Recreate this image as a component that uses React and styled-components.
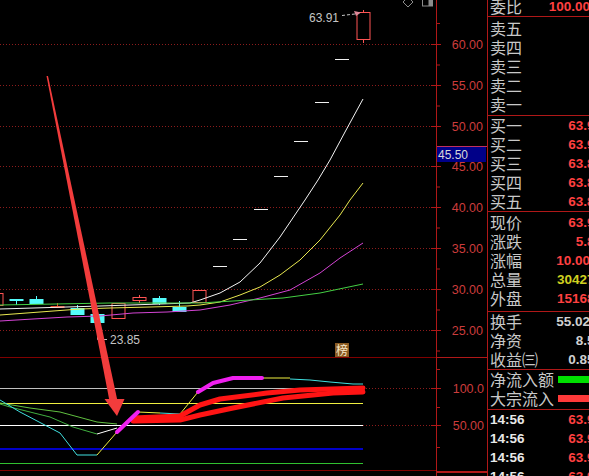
import React from 'react';
import styled, { createGlobalStyle } from 'styled-components';

const GlobalStyle = createGlobalStyle`
  html, body {
    margin: 0;
    padding: 0;
    background: #000;
    overflow: hidden;
  }
`;

const BORDER = '#b01818';
const UP = '#ff5454';
const DOWN = '#54fcfc';

// price -> y on the main pane
const py = p => 44 + (60 - p) * 8.16;
const levels = [60, 55, 50, 45, 40, 35, 30, 25];

const candles = [
  { cx: -3.5, top: 293, bot: 306, hi: 293, lo: 306, k: 'up' },
  { cx: 16.5, top: 299, bot: 301, hi: 299, lo: 305, k: 'down' },
  { cx: 36.5, top: 299, bot: 304, hi: 296, lo: 304, k: 'down' },
  { cx: 57.5, top: 306, bot: 308, hi: 303, lo: 308, k: 'red' },
  { cx: 77.5, top: 308, bot: 315, hi: 305, lo: 315, k: 'down' },
  { cx: 97.5, top: 314, bot: 323, hi: 312, lo: 339, k: 'down' },
  { cx: 118.5, top: 303, bot: 319, hi: 303, lo: 319, k: 'up' },
  { cx: 139.5, top: 297, bot: 301, hi: 295, lo: 303, k: 'up' },
  { cx: 159.5, top: 298, bot: 304, hi: 296, lo: 305, k: 'down' },
  { cx: 179.5, top: 307, bot: 312, hi: 301, lo: 312, k: 'down' },
  { cx: 199.5, top: 290, bot: 303, hi: 290, lo: 303, k: 'up' },
  { cx: 220, y: 266, k: 'flat' },
  { cx: 240, y: 239, k: 'flat' },
  { cx: 261, y: 209, k: 'flat' },
  { cx: 281, y: 176, k: 'flat' },
  { cx: 301, y: 141, k: 'flat' },
  { cx: 322, y: 102, k: 'flat' },
  { cx: 342, y: 59, k: 'flat' },
  { cx: 363.5, top: 12, bot: 40, hi: 10, lo: 43, k: 'up' },
];

const averages = [
  { color: '#f4f4f4', pts: '0,309 100,306 190,303 200,300 220,293 240,282 260,263 280,237 305,200 318,180 330,160 345,132 363,99' },
  { color: '#e8e850', pts: '0,315 40,312 80,309 110,308 150,307 187,306 200,305 220,302 240,295 260,287 280,275 300,260 320,240 340,215 350,200 363,183' },
  { color: '#d444d4', pts: '0,321 33,319 67,317 100,316 133,313 167,312 200,310 230,305 260,298 290,290 320,273 340,258 363,243' },
  { color: '#44d044', pts: '0,305 110,303 200,303 283,298 320,293 363,284' },
];

const flowLevels = [
  { y: 31.5, color: '#c0c0c0', w: 1 },
  { y: 46.5, color: '#f0f040', w: 1 },
  { y: 68.5, color: '#ffffff', w: 1 },
  { y: 92, color: '#0000c8', w: 2 },
  { y: 106.5, color: '#30c030', w: 1 },
];

const flowCurves = [
  { color: '#60c040', w: 1, pts: '0,46 30,51 60,55 97,65 117,67' },
  { color: '#40b040', w: 1, pts: '0,47 10,50 50,60 73,70 97,77' },
  { color: '#ffffff', w: 1, pts: '97,77 117,71' },
  { color: '#40e0e0', w: 1, pts: '0,43 20,55 60,76 77,98 97,98' },
  { color: '#f0f040', w: 1, pts: '97,98 117,75' },
  { color: '#f0f040', w: 1, pts: '138,55 160,56' },
  { color: '#40e0e0', w: 1, pts: '160,56 180,57' },
  { color: '#f0f040', w: 1, pts: '180,57 198,35' },
  { color: '#f0f040', w: 1, pts: '262,21 290,21' },
  { color: '#40e0e0', w: 1, pts: '290,22 310,23 330,25 353,27 363,27' },
  { color: '#ff1414', w: 5, pts: '133,61 180,59 200,48 220,42 267,36 300,33 363,31' },
  { color: '#ff1414', w: 5, pts: '133,64 180,63 200,58 233,51 283,41 333,36 363,35' },
  { color: '#f020f0', w: 4, pts: '117,75 138,55' },
  { color: '#f020f0', w: 4, pts: '198,35 213,26 233,21 262,21' },
];

const GridLine = styled.line`
  stroke: #8c1c1c;
  stroke-width: 1;
  stroke-dasharray: 1 2;
`;

const Rule = styled.line`
  stroke: ${p => p.$color || BORDER};
  stroke-width: ${p => p.$w || 1};
`;

const AxisLabel = styled.text`
  font-family: "Liberation Sans", Arial, sans-serif;
  font-size: 12.5px;
  fill: #cc3c3c;
  text-anchor: end;
`;

const TagText = styled.text`
  font-family: "Liberation Sans", Arial, sans-serif;
  font-size: 12px;
  fill: ${p => p.$color || '#c4c4c4'};
`;

const Curve = styled.polyline`
  fill: none;
  stroke: ${p => p.$color};
  stroke-width: ${p => p.$w || 1};
  stroke-linejoin: round;
  stroke-linecap: ${p => (p.$w > 1 ? 'round' : 'butt')};
`;

const Body = styled.rect`
  fill: ${p => p.$fill};
  stroke: ${p => p.$stroke};
  stroke-width: 1;
`;

const Badge = styled.text`
  font-family: "Noto Sans CJK SC", sans-serif;
  font-size: 12px;
  fill: #f8e8c8;
  text-anchor: middle;
`;

const Screen = styled.div`
  display: flex;
  width: 589px;
  height: 476px;
  overflow: hidden;
  background: #000;
`;

const ChartColumn = styled.div`
  position: relative;
  flex: 0 0 487px;
  display: flex;
  flex-direction: column;
`;

const PricePane = styled.svg`
  display: block;
  width: 487px;
  height: 357px;
  overflow: hidden;
`;

const FlowPane = styled.svg`
  display: block;
  width: 487px;
  height: 119px;
`;

const Annotation = styled.svg`
  position: absolute;
  left: 0;
  top: 0;
  width: 487px;
  height: 476px;
  pointer-events: none;
`;

const QuotePanel = styled.div`
  flex: 0 0 116px;
  margin-top: -3px;
  border-left: 1px solid ${BORDER};
  display: flex;
  flex-direction: column;
`;

const Section = styled.div`
  display: flex;
  flex-direction: column;
  padding: ${p => p.$pad || '0'};
  border-bottom: ${p => (p.$open ? 'none' : `1px solid ${BORDER}`)};
`;

const Row = styled.div`
  display: flex;
  align-items: center;
  justify-content: space-between;
  height: 19px;
  padding: 0 2px;
`;

const Label = styled.span`
  font-family: "Noto Sans CJK SC", sans-serif;
  font-size: 16px;
  line-height: 19px;
  color: #c8c8c8;
  white-space: nowrap;
`;

const Value = styled.span`
  font-family: "Liberation Sans", Arial, sans-serif;
  font-weight: bold;
  font-size: 13.5px;
  color: ${p => p.$color || '#ff4040'};
  white-space: nowrap;
`;

const FlowBar = styled.span`
  flex: 1;
  height: 7px;
  margin-left: 4px;
  margin-right: -2px;
  background: ${p => p.$color};
`;

function Candle({ c }) {
  const x = Math.round(c.cx - 7);
  if (c.k === 'flat') {
    return <Rule x1={x} x2={x + 14} y1={c.y + 0.5} y2={c.y + 0.5} $color="#f0f0f0" />;
  }
  const color = c.k === 'up' ? UP : c.k === 'red' ? '#e84020' : DOWN;
  const hollow = c.k === 'up';
  return (
    <g>
      <Rule x1={c.cx} x2={c.cx} y1={c.hi} y2={c.top} $color={color} />
      <Rule x1={c.cx} x2={c.cx} y1={c.bot} y2={c.lo} $color={color} />
      <Body
        x={c.cx - 6.5}
        y={c.top + 0.5}
        width={13}
        height={Math.max(c.bot - c.top - 1, 1)}
        $fill={hollow ? 'none' : color}
        $stroke={color}
      />
    </g>
  );
}

function PriceChart() {
  return (
    <PricePane viewBox="0 0 487 357">
      {levels.map(l => (
        <GridLine key={l} x1={0} x2={436} y1={Math.round(py(l)) + 0.5} y2={Math.round(py(l)) + 0.5} />
      ))}
      <Rule x1={436.5} x2={436.5} y1={0} y2={357} />
      {levels.map(l => {
        const y = Math.round(py(l)) + 0.5;
        return (
          <g key={l}>
            <Rule x1={431} x2={441} y1={y} y2={y} />
            <Rule x1={436} x2={440} y1={y + 20.5} y2={y + 20.5} />
            <AxisLabel x={483} y={y + 4.5}>{l.toFixed(2)}</AxisLabel>
          </g>
        );
      })}
      <Rule x1={436} x2={440} y1={23.5} y2={23.5} />

      <rect x={437} y={147} width={49} height={15} fill="#000088" />
      <Rule x1={437} x2={487} y1={146.5} y2={146.5} $color="#c03060" />
      <TagText x={438} y={159} $color="#d8d8d8">45.50</TagText>

      {candles.map((c, i) => <Candle key={i} c={c} />)}
      {averages.map((a, i) => <Curve key={i} points={a.pts} $color={a.color} />)}

      <TagText x={309} y={21.5}>63.91</TagText>
      <Rule x1={342} x2={355} y1={15.5} y2={14} $color="#c8c8c8" style={{ strokeDasharray: '3 2' }} />
      <polygon points="354,11 361,12.5 356,16" fill="#e08a9a" />

      <polyline points="97.5,334 97.5,339.5 107,339.5" fill="none" stroke="#c0c0c0" />
      <TagText x={110} y={343.5}>23.85</TagText>

      <polygon points="408,-3 413,2 408,7 403,2" fill="none" stroke="#8c8c8c" />
      <rect x={422.5} y={-3.5} width={10} height={9.5} fill="none" stroke="#8c8c8c" />
      <rect x={428.5} y={-3.5} width={4} height={9.5} fill="#8c8c8c" />

      <rect x={335} y={343} width={14} height={14} fill="#8a5a22" />
      <Badge x={342} y={354.5}>榜</Badge>
    </PricePane>
  );
}

function FlowChart() {
  return (
    <FlowPane viewBox="0 0 487 119">
      <Rule x1={0} x2={436} y1={0.5} y2={0.5} $color="#800000" />
      <Rule x1={436} x2={487} y1={0.5} y2={0.5} />
      {flowLevels.map((l, i) => (
        <Rule key={i} x1={0} x2={363} y1={l.y} y2={l.y} $color={l.color} $w={l.w} />
      ))}
      <GridLine x1={363} x2={436} y1={31.5} y2={31.5} />
      <GridLine x1={363} x2={436} y1={68.5} y2={68.5} />
      {flowCurves.map((c, i) => (
        <Curve key={i} points={c.pts} $color={c.color} $w={c.w} />
      ))}
      <Rule x1={436.5} x2={436.5} y1={0} y2={119} />
      <Rule x1={431} x2={441} y1={31.5} y2={31.5} />
      <Rule x1={431} x2={441} y1={68.5} y2={68.5} />
      <Rule x1={436} x2={440} y1={50.5} y2={50.5} />
      <Rule x1={436} x2={440} y1={12.5} y2={12.5} />
      <Rule x1={436} x2={440} y1={90.5} y2={90.5} />
      <AxisLabel x={484} y={36}>100.0</AxisLabel>
      <AxisLabel x={484} y={73}>50.00</AxisLabel>
      <Rule x1={0} x2={436} y1={113.5} y2={113.5} $color="#800000" />
      <Rule x1={436} x2={487} y1={115} y2={115} $w={2} />
    </FlowPane>
  );
}

function Pointer() {
  return (
    <Annotation viewBox="0 0 487 476">
      <polygon points="46.5,76 48,76 117.5,401 109.5,401" fill="#f23c3c" />
      <polygon points="104.5,399 124.5,399 117,416" fill="#f23c3c" />
    </Annotation>
  );
}

const asks = ['卖五', '卖四', '卖三', '卖二', '卖一'];
const bids = [
  ['买一', '63.91'],
  ['买二', '63.90'],
  ['买三', '63.89'],
  ['买四', '63.88'],
  ['买五', '63.87'],
];
const stats = [
  ['现价', '63.91', '#ff4040'],
  ['涨跌', '5.81', '#ff4040'],
  ['涨幅', '10.00%', '#ff4040'],
  ['总量', '304271', '#d0d020'],
  ['外盘', '151683', '#ff4040'],
];
const extra = [
  ['换手', '55.02%'],
  ['净资', '8.53'],
  ['收益㈢', '0.853'],
];

export default function App() {
  return (
    <>
      <GlobalStyle />
      <Screen>
        <ChartColumn>
          <PriceChart />
          <FlowChart />
          <Pointer />
        </ChartColumn>
        <QuotePanel>
          <Section>
            <Row><Label>委比</Label><Value>100.00%</Value></Row>
          </Section>
          <Section $pad="2px 0 1px">
            {asks.map(a => <Row key={a}><Label>{a}</Label></Row>)}
          </Section>
          <Section>
            {bids.map(([l, v]) => <Row key={l}><Label>{l}</Label><Value>{v}</Value></Row>)}
          </Section>
          <Section $pad="1px 0 3px">
            {stats.map(([l, v, c]) => <Row key={l}><Label>{l}</Label><Value $color={c}>{v}</Value></Row>)}
          </Section>
          <Section>
            {extra.map(([l, v]) => <Row key={l}><Label>{l}</Label><Value $color="#d0d0d0">{v}</Value></Row>)}
          </Section>
          <Section $pad="0 0 1px">
            <Row><Label>净流入额</Label><FlowBar $color="#00e000" /></Row>
            <Row><Label>大宗流入</Label><FlowBar $color="#ff3a3a" /></Row>
          </Section>
          <Section $open>
            {[0, 1, 2, 3].map(i => (
              <Row key={i}><Value $color="#e8e8e8">14:56</Value><Value>63.91</Value></Row>
            ))}
          </Section>
        </QuotePanel>
      </Screen>
    </>
  );
}
